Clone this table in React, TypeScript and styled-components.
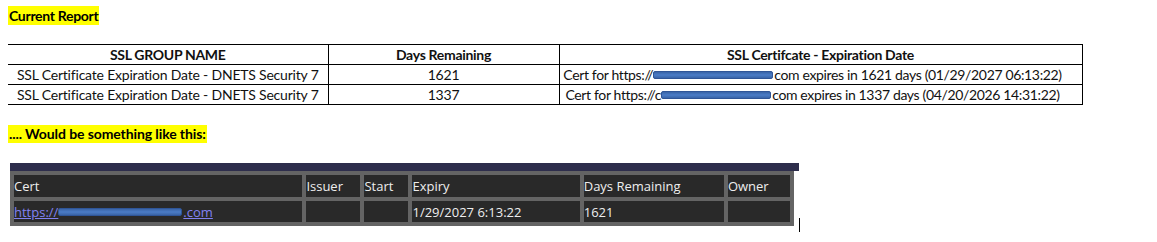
import React, { FC } from 'react'
import styled, { createGlobalStyle } from 'styled-components'

interface ReportRow {
  group: string
  days: string
  prefix: string
  suffix: string
  lead?: string
}

const reportRows: ReportRow[] = [
  {
    group: 'SSL Certificate Expiration Date - DNETS Security 7',
    days: '1621',
    prefix: 'Cert for https://',
    suffix: 'com expires in 1621 days (01/29/2027 06:13:22)',
  },
  {
    group: 'SSL Certificate Expiration Date - DNETS Security 7',
    days: '1337',
    prefix: 'Cert for https://',
    lead: 'c',
    suffix: 'com expires in 1337 days (04/20/2026 14:31:22)',
  },
]

const columns = [
  { label: 'Cert', width: 288 },
  { label: 'Issuer', width: 54 },
  { label: 'Start', width: 44 },
  { label: 'Expiry', width: 167 },
  { label: 'Days Remaining', width: 140 },
  { label: 'Owner', width: 62 },
]

const App: FC = () => {
  return (
    <>
      <GlobalStyle />
      <Page>
        <Highlight>Current Report</Highlight>

        <ReportTable>
          <colgroup>
            <col style={{ width: 320 }} />
            <col style={{ width: 231 }} />
            <col style={{ width: 523 }} />
          </colgroup>
          <thead>
            <tr>
              <ReportHead>SSL GROUP NAME</ReportHead>
              <ReportHead>Days Remaining</ReportHead>
              <ReportHead>SSL Certifcate - Expiration Date</ReportHead>
            </tr>
          </thead>
          <tbody>
            {reportRows.map((row, i) => (
              <tr key={i}>
                <ReportCell>{row.group}</ReportCell>
                <ReportCell>{row.days}</ReportCell>
                <ReportCell $tight>
                  {row.prefix}
                  {row.lead}
                  <Redacted $width={row.lead ? 110 : 120} />
                  {row.suffix}
                </ReportCell>
              </tr>
            ))}
          </tbody>
        </ReportTable>

        <Highlight $spaced>.... Would be something like this:</Highlight>

        <PreviewRow>
          <PreviewBlock>
            <NavyBar />
            <DarkTable>
              <colgroup>
                {columns.map((c) => (
                  <col key={c.label} style={{ width: c.width }} />
                ))}
              </colgroup>
              <tbody>
                <tr>
                  {columns.map((c) => (
                    <DarkCell key={c.label} $tall>
                      {c.label}
                    </DarkCell>
                  ))}
                </tr>
                <tr>
                  <DarkCell>
                    <CertLink href="#">
                      https://
                      <Redacted $width={124} $dark />
                      .com
                    </CertLink>
                  </DarkCell>
                  <DarkCell />
                  <DarkCell />
                  <DarkCell>1/29/2027 6:13:22</DarkCell>
                  <DarkCell>1621</DarkCell>
                  <DarkCell />
                </tr>
              </tbody>
            </DarkTable>
          </PreviewBlock>
          <Caret />
        </PreviewRow>
      </Page>
    </>
  )
}

export default App

// Styles
const GlobalStyle = createGlobalStyle`
  body {
    margin: 0;
    background: #fff;
    font-family: 'Lato', 'Liberation Sans', sans-serif;
  }
`

const Page = styled.div`
  display: flex;
  flex-direction: column;
  align-items: flex-start;
  padding: 6px 0 0 8px;
`

const Highlight = styled.span<{ $spaced?: boolean }>`
  display: inline-block;
  margin-top: ${(p) => (p.$spaced ? '20px' : '0')};
  padding: 0 1px;
  height: ${(p) => (p.$spaced ? '18px' : '19px')};
  line-height: ${(p) => (p.$spaced ? '18px' : '19px')};
  background: #ffff00;
  color: #000;
  font-size: 14px;
  font-weight: 700;
  letter-spacing: ${(p) => (p.$spaced ? '-0.1px' : '-0.3px')};
`

const ReportTable = styled.table`
  margin-top: 19px;
  width: 1074px;
  table-layout: fixed;
  border-collapse: collapse;
  color: #111;
  font-size: 14px;
`

const ReportHead = styled.th`
  height: 19px;
  padding: 0;
  border-top: 1px solid #000;
  border-bottom: 1px solid #000;
  border-right: 1px solid #000;
  text-align: center;
  font-weight: 700;
  letter-spacing: -0.3px;
`

const ReportCell = styled.td<{ $tight?: boolean }>`
  height: 19px;
  padding: ${(p) => (p.$tight ? '0 16px 0 0' : '0')};
  border-bottom: 1px solid #000;
  border-right: 1px solid #000;
  text-align: center;
  white-space: nowrap;
  letter-spacing: ${(p) => (p.$tight ? '-0.35px' : '-0.2px')};
`

const Redacted = styled.span<{ $width: number; $dark?: boolean }>`
  display: inline-block;
  width: ${(p) => p.$width}px;
  height: 8px;
  margin-right: 1px;
  vertical-align: 1px;
  border-radius: 2px;
  background: linear-gradient(#3a64a6, #4b7cc6 50%, #3a64a6);
  border: 1px solid #2f5597;
  box-sizing: border-box;
`

const PreviewRow = styled.div`
  display: flex;
  align-items: flex-start;
  margin-top: 20px;
  margin-left: 2px;
`

const PreviewBlock = styled.div`
  display: flex;
  flex-direction: column;
  width: 789px;
`

const NavyBar = styled.div`
  height: 8px;
  background: #2e2e4c;
`

const DarkTable = styled.table`
  width: 784px;
  table-layout: fixed;
  border-collapse: separate;
  border-spacing: 4px;
  background: #646464;
  font-family: 'Open Sans', 'Noto Sans', sans-serif;
  font-size: 13px;
  color: #eeeeee;
`

const DarkCell = styled.td<{ $tall?: boolean }>`
  height: ${(p) => (p.$tall ? '22px' : '21px')};
  padding: 0 1px 0 0;
  background: #292929;
  white-space: nowrap;
  overflow: hidden;
  line-height: 18px;
  vertical-align: middle;
`

const CertLink = styled.a`
  color: #8282f2;
  text-decoration: underline;
`

const Caret = styled.div`
  width: 1px;
  height: 14px;
  margin-top: 55px;
  background: #000;
`
